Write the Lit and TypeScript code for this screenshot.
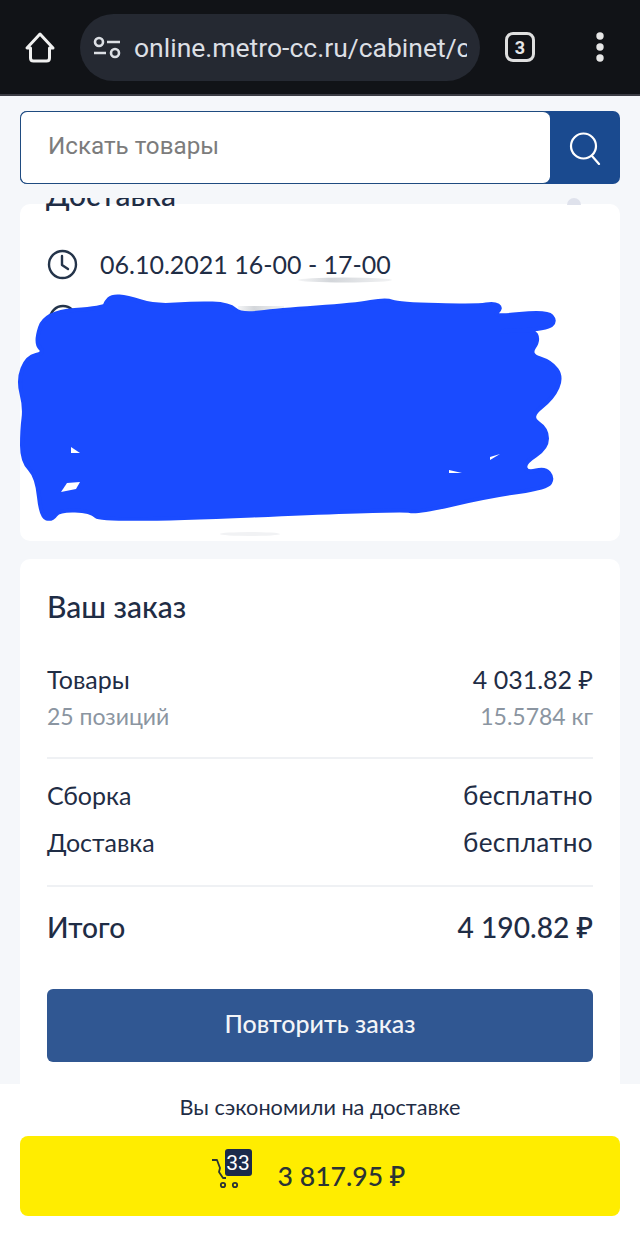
import { LitElement, html, css, svg } from "lit";
import { customElement } from "lit/decorators.js";

// outline of the blue marker scribble, page coordinates
const SCRIBBLE = [
  [106, 302], [112, 296], [127, 297], [155, 306], [196, 303], [229, 304], [241, 315], [278, 310],
  [355, 305], [386, 299], [398, 304], [478, 306], [494, 303], [502, 308], [492, 317], [547, 311],
  [556, 321], [547, 329], [490, 332], [533, 329], [539, 340], [529, 355], [551, 362], [562, 377],
  [553, 398], [529, 417], [547, 429], [547, 448], [524, 463], [527, 473], [545, 468], [553, 478],
  [547, 488], [490, 496], [416, 513], [404, 509], [102, 522], [91, 511], [59, 510], [52, 520],
  [41, 517], [37, 477], [22, 461], [22, 430], [25, 407], [18, 380], [27, 357], [45, 353],
  [35, 343], [45, 312], [104, 308],
];
const toPoints = (pts: number[][]) => pts.map((p) => p.join(",")).join(" ");

// rounds the outline off by curving through the midpoints of its edges
const toSmoothPath = (pts: number[][]) => {
  const mid = (a: number[], b: number[]) => [(a[0] + b[0]) / 2, (a[1] + b[1]) / 2];
  const start = mid(pts[pts.length - 1], pts[0]);
  let d = `M${start[0]} ${start[1]}`;
  pts.forEach((p, i) => {
    const m = mid(p, pts[(i + 1) % pts.length]);
    d += ` Q${p[0]} ${p[1]} ${m[0]} ${m[1]}`;
  });
  return d + " Z";
};

@customElement("app-root")
export class AppRoot extends LitElement {
  static styles = css`
    :host {
      display: flex;
      flex-direction: column;
      position: relative;
      width: 640px;
      height: 1249px;
      overflow: hidden;
      background: #f5f7fa;
      font-family: Lato, "Open Sans", "Noto Sans", sans-serif;
      color: #1f2d45;
    }
    .chrome {
      flex: none;
      height: 94px;
      display: flex;
      align-items: center;
      background: #111317;
      border-bottom: 2px solid #3b3c44;
      padding-left: 24px;
    }
    .home { width: 32px; height: 32px; margin-right: 24px; }
    .pill {
      width: 400px;
      height: 67px;
      margin-top: 1px;
      box-sizing: border-box;
      display: flex;
      align-items: center;
      gap: 13px;
      padding: 0 13px;
      background: #252932;
      border-radius: 34px;
    }
    .tune { flex: none; width: 28px; height: 24px; }
    .url {
      width: 333px;
      overflow: hidden;
      white-space: nowrap;
      font: 400 26.5px Roboto, sans-serif;
      color: #dcdfe4;
    }
    .tabs {
      margin-left: 25px;
      width: 30px;
      height: 30px;
      box-sizing: border-box;
      border: 3px solid #dfdfdf;
      border-radius: 8px;
      display: flex;
      align-items: center;
      justify-content: center;
      font: 700 18px Roboto, sans-serif;
      color: #e6e6e6;
    }
    .dots { margin-left: 61px; width: 8px; height: 30px; }
    .search {
      flex: none;
      margin: 15px 20px 0;
      height: 73px;
      display: flex;
      background: #1a4a8f;
      border-radius: 7px;
    }
    .field {
      flex: 1;
      display: flex;
      align-items: center;
      padding: 0 0 3px 27px;
      background: #fff;
      border: 1.5px solid #1f4b80;
      border-right: none;
      border-radius: 7px;
      font: 400 24.2px Roboto, sans-serif;
      color: #7c7c7c;
    }
    .go {
      flex: none;
      width: 70px;
      display: flex;
      align-items: center;
      justify-content: center;
    }
    .go svg { width: 34px; height: 34px; }
    .view {
      flex: 1;
      min-height: 0;
      margin-top: 14px;
      padding: 6px 20px 0;
      overflow: hidden;
      display: flex;
      flex-direction: column;
      gap: 18px;
    }
    .card { flex: none; background: #fff; border-radius: 10px; }
    .delivery { height: 337px; }
    .delivery h2 {
      margin: -26px 0 0 26px;
      font-size: 30px;
      line-height: 32px;
      font-weight: 500;
    }
    .peg {
      position: absolute;
      left: 567px;
      top: 198px;
      width: 14px;
      height: 7px;
      border-radius: 7px 7px 0 0;
      background: #dfe2ec;
    }
    .when {
      display: flex;
      align-items: center;
      gap: 22px;
      margin: 38px 0 0 27px;
      font-size: 25px;
      line-height: 32px;
    }
    .when svg { width: 31px; height: 31px; }
    .order { padding: 0 27px 40px; }
    .order h2 {
      margin: 0;
      padding: 30px 0 0;
      font-size: 30px;
      line-height: 34px;
      font-weight: 500;
    }
    .row {
      display: flex;
      justify-content: space-between;
      font-size: 25px;
      line-height: 32px;
    }
    .goods { margin-top: 40px; }
    .sub { margin-top: 5px; font-size: 23px; color: #8b95a1; }
    hr {
      margin: 0;
      border: none;
      height: 2px;
      background: #eff1f4;
    }
    .sep1 { margin-top: 25px; }
    .free { margin-top: 12px; padding-top: 8px; }
    .free .wide { font-size: 26.2px; letter-spacing: 0.3px; }
    .free + .free { margin-top: 15px; padding-top: 0; }
    .sep2 { margin-top: 27px; }
    .total { margin-top: 24px; font-size: 28.2px; line-height: 32px; font-weight: 500; }
    .repeat {
      margin-top: 46px;
      height: 73px;
      box-sizing: border-box;
      padding-bottom: 5px;
      display: flex;
      align-items: center;
      justify-content: center;
      background: #305792;
      border-radius: 6px;
      font-size: 25px;
      font-weight: 500;
      color: #f3f5f8;
    }
    .foot {
      flex: none;
      height: 165px;
      box-sizing: border-box;
      padding: 8px 20px 0;
      background: #fff;
    }
    .saved {
      text-align: center;
      font-size: 21.7px;
      line-height: 30px;
    }
    .pay {
      margin-top: 14px;
      height: 80px;
      box-sizing: border-box;
      padding-right: 23px;
      display: flex;
      align-items: center;
      justify-content: center;
      gap: 26px;
      background: #ffed00;
      border-radius: 8px;
      font-size: 26.6px;
      font-weight: 500;
      color: #2a3334;
    }
    .cart { position: relative; width: 40px; height: 48px; margin-bottom: 12px; }
    .cart svg { width: 40px; height: 48px; }
    .badge {
      position: absolute;
      left: 13px;
      top: 3px;
      width: 27px;
      height: 27px;
      display: flex;
      align-items: center;
      justify-content: center;
      background: #1b2a4a;
      border-radius: 3px;
      font: 400 21px Roboto, sans-serif;
      color: #fff;
    }
    .paint {
      position: absolute;
      left: 0;
      top: 0;
      width: 640px;
      height: 1249px;
      pointer-events: none;
    }
  `;

  private paint() {
    return svg`
      <defs>
        <linearGradient id="sm" x1="0" x2="1">
          <stop offset="0" stop-color="#f4f5f6" />
          <stop offset="0.35" stop-color="#d3d6da" />
          <stop offset="1" stop-color="#f2f3f4" />
        </linearGradient>
      </defs>
      <ellipse cx="345" cy="280" rx="47" ry="2.5" fill="url(#sm)" />
      <rect x="238" y="306" width="46" height="12" fill="url(#sm)" />
      <ellipse cx="250" cy="534" rx="30" ry="2" fill="#f1f2f4" />
      <circle cx="63" cy="319" r="13" fill="none" stroke="#24344a" stroke-width="2.5" />
      <rect x="102" y="309" width="2" height="8" fill="#24344a" />
      <path d=${toSmoothPath(SCRIBBLE)} fill="#1a4bff" stroke="#1a4bff" stroke-width="4" stroke-linejoin="round" />
      <polygon points="71,447 80,453 71,453" fill="#fff" />
      <polygon points="61,492 67,483 80,482 76,489" fill="#fff" />
      <polygon points=${toPoints([[449, 470], [462, 473], [449, 473]])} fill="#fff" />
      <polygon points="490,457 500,454 490,460" fill="#fff" />
    `;
  }

  render() {
    return html`
      <div class="chrome">
        <svg class="home" viewBox="0 0 32 32" fill="none" stroke="#f0f0f0" stroke-width="3" stroke-linejoin="round">
          <path d="M16 3 L3 17 H6.5 V27 Q6.5 30 9.5 30 H22.5 Q25.5 30 25.5 27 V17 H29 Z" />
        </svg>
        <div class="pill">
          <svg class="tune" viewBox="0 0 28 24" fill="none" stroke="#dcdfe4" stroke-width="2.6">
            <circle cx="6" cy="6" r="4" />
            <path d="M14 6 H27 M1 17 H13" />
            <circle cx="22" cy="17" r="4" />
          </svg>
          <div class="url">online.metro-cc.ru/cabinet/c</div>
        </div>
        <div class="tabs">3</div>
        <svg class="dots" viewBox="0 0 8 30" fill="#e6e6e6">
          <circle cx="4" cy="4" r="3.7" />
          <circle cx="4" cy="15" r="3.7" />
          <circle cx="4" cy="26" r="3.7" />
        </svg>
      </div>

      <div class="search">
        <div class="field">Искать товары</div>
        <div class="go">
          <svg viewBox="0 0 34 34" fill="none" stroke="#fff" stroke-width="2.2" stroke-linecap="round">
            <circle cx="15.5" cy="15" r="12.5" />
            <path d="M24 25 L31 33" />
          </svg>
        </div>
      </div>

      <div class="view">
        <div class="card delivery">
          <h2>Доставка</h2>
          <div class="when">
            <svg viewBox="0 0 31 31" fill="none" stroke="#24344a" stroke-width="2.4" stroke-linecap="round" stroke-linejoin="round">
              <circle cx="15.5" cy="15.5" r="13.5" />
              <path d="M15 7 V16 L21 20" />
            </svg>
            <span>06.10.2021 16-00 - 17-00</span>
          </div>
        </div>

        <div class="card order">
          <h2>Ваш заказ</h2>
          <div class="row goods"><span>Товары</span><span>4 031.82 ₽</span></div>
          <div class="row sub"><span>25 позиций</span><span>15.5784 кг</span></div>
          <hr class="sep1" />
          <div class="row free"><span>Сборка</span><span class="wide">бесплатно</span></div>
          <div class="row free"><span>Доставка</span><span class="wide">бесплатно</span></div>
          <hr class="sep2" />
          <div class="row total"><span>Итого</span><span>4 190.82 ₽</span></div>
          <div class="repeat">Повторить заказ</div>
        </div>
      </div>

      <div class="foot">
        <div class="saved">Вы сэкономили на доставке</div>
        <div class="pay">
          <div class="cart">
            <svg viewBox="0 0 40 48" fill="none" stroke="#2a3334" stroke-width="1.8" stroke-linejoin="round">
              <path d="M0 14 H5 L8 22 L7 26 L11 32 H14" />
              <circle cx="11" cy="39" r="2.2" />
              <circle cx="23" cy="39" r="2.2" />
            </svg>
            <div class="badge">33</div>
          </div>
          <span>3 817.95 ₽</span>
        </div>
      </div>

      <div class="peg"></div>
      <svg class="paint" viewBox="0 0 640 1249">${this.paint()}</svg>
    `;
  }
}
